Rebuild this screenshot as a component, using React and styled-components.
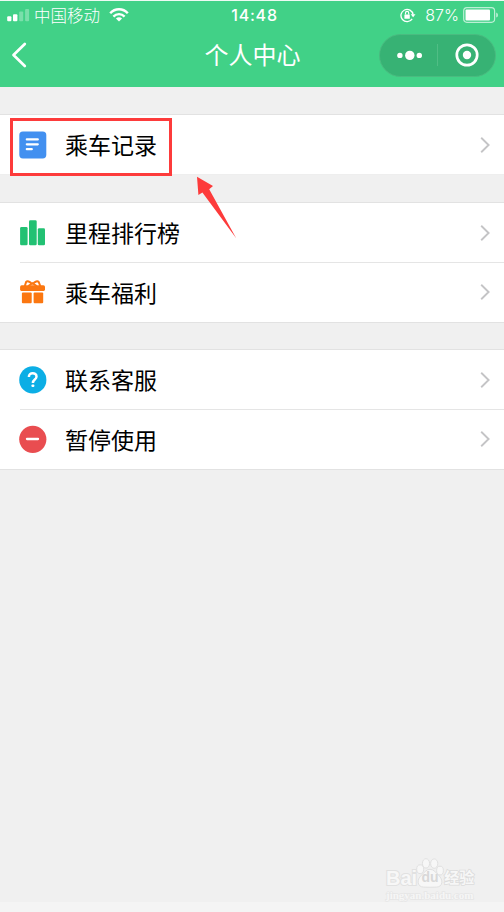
import React from 'react'
import styled, { createGlobalStyle } from 'styled-components'

const App = () => (
  <>
    <GlobalStyle />
    <Screen>
      <Header>
        <StatusBar>
          <Carrier>
            <SignalIcon />
            <CarrierName>中国移动</CarrierName>
            <WifiIcon />
          </Carrier>
          <Clock>14:48</Clock>
          <Power>
            <LockIcon />
            <Percent>87%</Percent>
            <BatteryIcon />
          </Power>
        </StatusBar>
        <NavBar>
          <Back aria-label='返回'>
            <svg width='16' height='26' viewBox='0 0 16 26' fill='none' stroke='#fff' strokeWidth='2.7'>
              <path d='M13.8 2 L2.5 13 L13.8 24' strokeLinejoin='round' strokeLinecap='round' />
            </svg>
          </Back>
          <Title>个人中心</Title>
          <Capsule>
            <CapsuleButton aria-label='更多'>
              <svg width='26' height='12' viewBox='0 0 26 12' fill='#fff'>
                <circle cx='3.9' cy='6.4' r='2.7' />
                <circle cx='13.8' cy='6.4' r='4.7' />
                <circle cx='23.3' cy='6.4' r='2.7' />
              </svg>
            </CapsuleButton>
            <CapsuleLine />
            <CapsuleButton aria-label='关闭'>
              <svg width='24' height='24' viewBox='0 0 24 24' fill='#fff'>
                <circle cx='12' cy='12' r='10.2' fill='none' stroke='#fff' strokeWidth='2.7' />
                <circle cx='12' cy='12' r='4.2' />
              </svg>
            </CapsuleButton>
          </Capsule>
        </NavBar>
      </Header>

      <Menu>
        {groups.map((items, index) => (
          <Group key={index} $borderless={index === 0}>
            {items.map(({ name, Icon, marked }) => (
              <Row key={name}>
                <Icon />
                <Label>{name}</Label>
                <Chevron />
                {marked && <Frame />}
                {marked && <Arrow />}
              </Row>
            ))}
          </Group>
        ))}
      </Menu>

      <Watermark />
      <BottomStrip />
    </Screen>
  </>
)

const SignalIcon = () => (
  <svg width='24' height='14' viewBox='0 0 24 14' fill='#fff'>
    <rect x='0.2' y='8.2' width='4.2' height='5' rx='1' />
    <rect x='6' y='6.2' width='4.4' height='7' rx='1' />
    <rect x='12.2' y='3.4' width='4' height='9.8' rx='1' opacity='.3' />
    <rect x='18.1' y='1' width='4' height='12.2' rx='1' opacity='.3' />
  </svg>
)

const WifiIcon = () => (
  <svg width='20' height='14' viewBox='0 0 20 14' fill='none' stroke='#fff' strokeWidth='2.4'>
    <path d='M1.2 5.2 C6 -.1 14 -.1 18.8 5.2' />
    <path d='M4.4 8.6 C7.5 5.3 12.5 5.3 15.6 8.6' />
    <path d='M6.9 10.5 Q10 8 13.1 10.5 L10 13.6 Z' fill='#fff' stroke='none' />
  </svg>
)

const LockIcon = () => (
  <svg width='16' height='15' viewBox='0 0 16 15' fill='none' stroke='#fff' strokeWidth='1.3'>
    <path d='M12.2 10.8 A6.1 6.1 0 1 1 13.1 6.6' />
    <path d='M10.7 6.3 H15.5 L13.1 9.2 Z' fill='#fff' stroke='none' />
    <rect x='4.4' y='6.4' width='5.4' height='4.4' rx='.5' fill='#fff' stroke='none' />
    <path d='M5.5 6.6 V5 A1.6 1.6 0 0 1 8.7 5 V6.6' strokeWidth='1.2' />
  </svg>
)

const BatteryIcon = () => (
  <svg width='36' height='16' viewBox='0 0 36 16' fill='#fff'>
    <rect x='.7' y='.7' width='30.9' height='14.6' rx='3.2' fill='none' stroke='#fff' strokeOpacity='.65' strokeWidth='1.2' />
    <rect x='2.5' y='2.5' width='24.5' height='11' rx='1' />
    <path d='M33.2 5.5 Q35 6 35 8 Q35 10 33.2 10.5 Z' opacity='.65' />
  </svg>
)

const RecordIcon = () => (
  <svg width='28' height='28' viewBox='0 0 28 28'>
    <rect x='.3' y='.4' width='27' height='27' rx='3.6' fill='#4290f0' />
    <path d='M7.8 8.4 H18.8 M7.8 13.3 H18.8 M7.8 18.2 H12.8' stroke='#fff' strokeWidth='2.2' strokeLinecap='round' />
  </svg>
)

const RankIcon = () => (
  <svg width='28' height='28' viewBox='0 0 28 28' fill='#22c173'>
    <rect x='1.1' y='8' width='7.5' height='18.2' rx='1.3' />
    <rect x='10' y='1.2' width='7.7' height='25' rx='1.3' />
    <rect x='18.8' y='9.3' width='7.2' height='16.9' rx='1.3' />
  </svg>
)

const GiftIcon = () => (
  <svg width='28' height='28' viewBox='0 0 28 28' fill='#fb7711'>
    <path d='M2.6 7.3 H24.4 Q26 7.3 26 8.9 V11.6 Q26 12.9 24.6 12.9 H2.4 Q1.1 12.9 1.1 11.6 V8.9 Q1.1 7.3 2.6 7.3 Z' />
    <path d='M13.2 6.2 C10.5 3.2 8.3 2.6 7.1 4 L5.8 8 M13.6 6.2 C16.3 3.2 18.5 2.6 19.7 4 L21.3 8 M9.3 8 L13.4 5.2 L17.7 8' fill='none' stroke='#fb7711' strokeWidth='2' />
    <rect x='2.9' y='14.6' width='9.8' height='10.7' rx='1' />
    <rect x='14.6' y='14.6' width='9.6' height='10.7' rx='1' />
  </svg>
)

const ServiceIcon = () => (
  <svg width='28' height='28' viewBox='0 0 28 28'>
    <circle cx='13.8' cy='13.9' r='13.6' fill='#0caee5' />
    <path d='M9.9 11 C9.6 5.9 17.7 6.1 17.5 10.7 C17.4 13.6 13.9 13.4 13.9 16.9' fill='none' stroke='#fff' strokeWidth='2.5' />
    <rect x='12.5' y='18.4' width='2.8' height='2.6' rx='.8' fill='#fff' />
  </svg>
)

const PauseIcon = () => (
  <svg width='28' height='28' viewBox='0 0 28 28'>
    <circle cx='13.8' cy='14.3' r='13.6' fill='#e94d50' />
    <path d='M8 14 H19' stroke='#fff' strokeWidth='2.3' strokeLinecap='round' />
  </svg>
)

const Chevron = () => (
  <svg width='10' height='16' viewBox='0 0 10 16' fill='none' stroke='#c4c4c6' strokeWidth='1.9'>
    <path d='M1.2 .8 L8.6 8 L1.2 15.2' />
  </svg>
)

const Arrow = () => (
  <ArrowSvg width='42' height='64' viewBox='0 0 42 64'>
    <path d='M1 .7 L17 10 L13.2 13.3 L40.2 62.3 L6.4 16.4 L2.4 19 Z' fill='#fd3b3b' />
  </ArrowSvg>
)

const Watermark = () => (
  <Mark>
    <MarkTop>
      <MarkText>Bai</MarkText>
      <Paw>
        <svg width='28' height='30' viewBox='0 0 28 30' fill='#f7f7f7' stroke='#e0e0e0' strokeWidth='1'>
          <ellipse cx='4.2' cy='11.2' rx='3.5' ry='4.4' />
          <ellipse cx='10' cy='5.4' rx='3.6' ry='4.7' />
          <ellipse cx='18.2' cy='5.6' rx='3.6' ry='4.7' />
          <ellipse cx='24' cy='12.6' rx='3.4' ry='4.4' />
          <path d='M14 11.3 C18 11.3 19.5 14.5 22.5 17.2 C27.5 21.5 27 28.9 20.5 29.1 C16.5 29.3 11.5 29.3 7.5 29.1 C1 28.9 .5 21.5 5.5 17.2 C8.5 14.5 10 11.3 14 11.3 Z' />
        </svg>
        <Du>du</Du>
      </Paw>
      <MarkText $chinese>经验</MarkText>
    </MarkTop>
    <Address>jingyan.baidu.com</Address>
  </Mark>
)

const groups = [
  [
    { name: '乘车记录', Icon: RecordIcon, marked: true }
  ],
  [
    { name: '里程排行榜', Icon: RankIcon },
    { name: '乘车福利', Icon: GiftIcon }
  ],
  [
    { name: '联系客服', Icon: ServiceIcon },
    { name: '暂停使用', Icon: PauseIcon }
  ]
]

const GlobalStyle = createGlobalStyle`
  * {
    box-sizing: border-box;
  }

  body {
    margin: 0;
    background: #f0f0f0;
    font-family: Inter, 'Noto Sans CJK SC', sans-serif;
  }

  svg {
    display: block;
    flex-shrink: 0;
  }
`

const Screen = styled.div`
  display: flex;
  flex-direction: column;
  width: 504px;
  height: 912px;
  overflow: hidden;
  background: #f0f0f0;
`

const Header = styled.header`
  height: 87px;
  border-top: 1px solid #eefaf3;
  background: #41d187;
  color: #fff;
`

const StatusBar = styled.div`
  display: grid;
  grid-template-columns: 1fr auto 1fr;
  align-items: center;
  height: 28px;
  padding: 0 5px 0 7px;
`

const Carrier = styled.div`
  display: flex;
  align-items: center;
`

const CarrierName = styled.span`
  margin: 0 9px 0 3px;
  font: 300 16.5px/24px 'Noto Sans CJK SC', sans-serif;
`

const Clock = styled.span`
  margin-left: 3px;
  font-size: 16px;
  font-weight: 500;
  letter-spacing: .8px;
`

const Power = styled.div`
  display: flex;
  align-items: center;
  justify-content: flex-end;
`

const Percent = styled.span`
  margin: 0 4px 0 9px;
  font-size: 16px;
  font-weight: 300;
`

const NavBar = styled.div`
  display: grid;
  grid-template-columns: 1fr auto 1fr;
  align-items: center;
  height: 52px;
  padding: 0 8px 0 11px;
`

const Back = styled.button`
  justify-self: start;
  padding: 0;
  border: 0;
  background: none;
`

const Title = styled.h1`
  margin: 0 2px 2px 0;
  font: 400 24px/36px 'Noto Sans CJK SC', sans-serif;
`

const Capsule = styled.div`
  display: flex;
  align-items: center;
  justify-self: end;
  width: 117px;
  height: 43px;
  border: 1px solid #4abb80;
  border-radius: 22px;
  background: #37b274;
`

const CapsuleButton = styled.button`
  display: flex;
  flex: 1;
  justify-content: center;
  padding: 0;
  border: 0;
  background: none;
`

const CapsuleLine = styled.span`
  width: 1px;
  height: 22px;
  background: #50bd85;
`

const Menu = styled.main`
  display: flex;
  flex-direction: column;
  padding-top: 27px;
`

const Group = styled.section`
  margin-bottom: ${({ $borderless }) => $borderless ? '27px' : '26px'};
  border-top: 1px solid #e2e2e2;
  border-bottom: 1px solid ${({ $borderless }) => $borderless ? '#eee' : '#e2e2e2'};
  background: #fff;
`

const Row = styled.div`
  position: relative;
  display: flex;
  align-items: center;
  height: 59px;
  padding: 0 14px 0 19px;

  & + & {
    height: 60px;
  }

  & + &::before {
    content: '';
    position: absolute;
    top: 0;
    left: 20px;
    right: 0;
    height: 1px;
    background: #e5e5e5;
  }
`

const Label = styled.span`
  flex: 1;
  margin: 0 0 1px 18px;
  color: #000;
  font: 400 23px/34px 'Noto Sans CJK SC', sans-serif;
`

/* hand-drawn style callout over the first row */
const Frame = styled.span`
  position: absolute;
  top: 3px;
  left: 10px;
  width: 162px;
  height: 58px;
  border: 3px solid #fd3b3b;
`

const ArrowSvg = styled.svg`
  position: absolute;
  z-index: 1;
  top: 61px;
  left: 196px;
`

const Mark = styled.div`
  display: flex;
  flex-direction: column;
  width: 90px;
  margin: auto 28px 0 auto;
`

const MarkTop = styled.div`
  display: flex;
  align-items: flex-end;
  height: 30px;
  white-space: nowrap;
`

const MarkText = styled.span`
  color: #f7f7f7;
  font: ${({ $chinese }) => $chinese
    ? "700 15px/22px 'Noto Sans CJK SC', sans-serif"
    : "700 20px/20px 'Liberation Sans', sans-serif"};
  -webkit-text-stroke: ${({ $chinese }) => $chinese ? '1.6px #dcdcdc' : '2px #e1e1e1'};
  paint-order: stroke fill;
`

const Paw = styled.span`
  position: relative;
  margin: 0 0 0 -1px;
`

const Du = styled.span`
  position: absolute;
  right: 0;
  bottom: 4px;
  left: 0;
  color: #d8d8d8;
  font: 700 14px/14px 'Liberation Sans', sans-serif;
  text-align: center;
`

const Address = styled.span`
  color: #f6f6f6;
  font: 700 11px/14px 'Liberation Serif', serif;
  -webkit-text-stroke: 1.4px #e6e6e6;
  paint-order: stroke fill;
`

const BottomStrip = styled.div`
  height: 10px;
  background: #f4f4f4;
`

export default App
